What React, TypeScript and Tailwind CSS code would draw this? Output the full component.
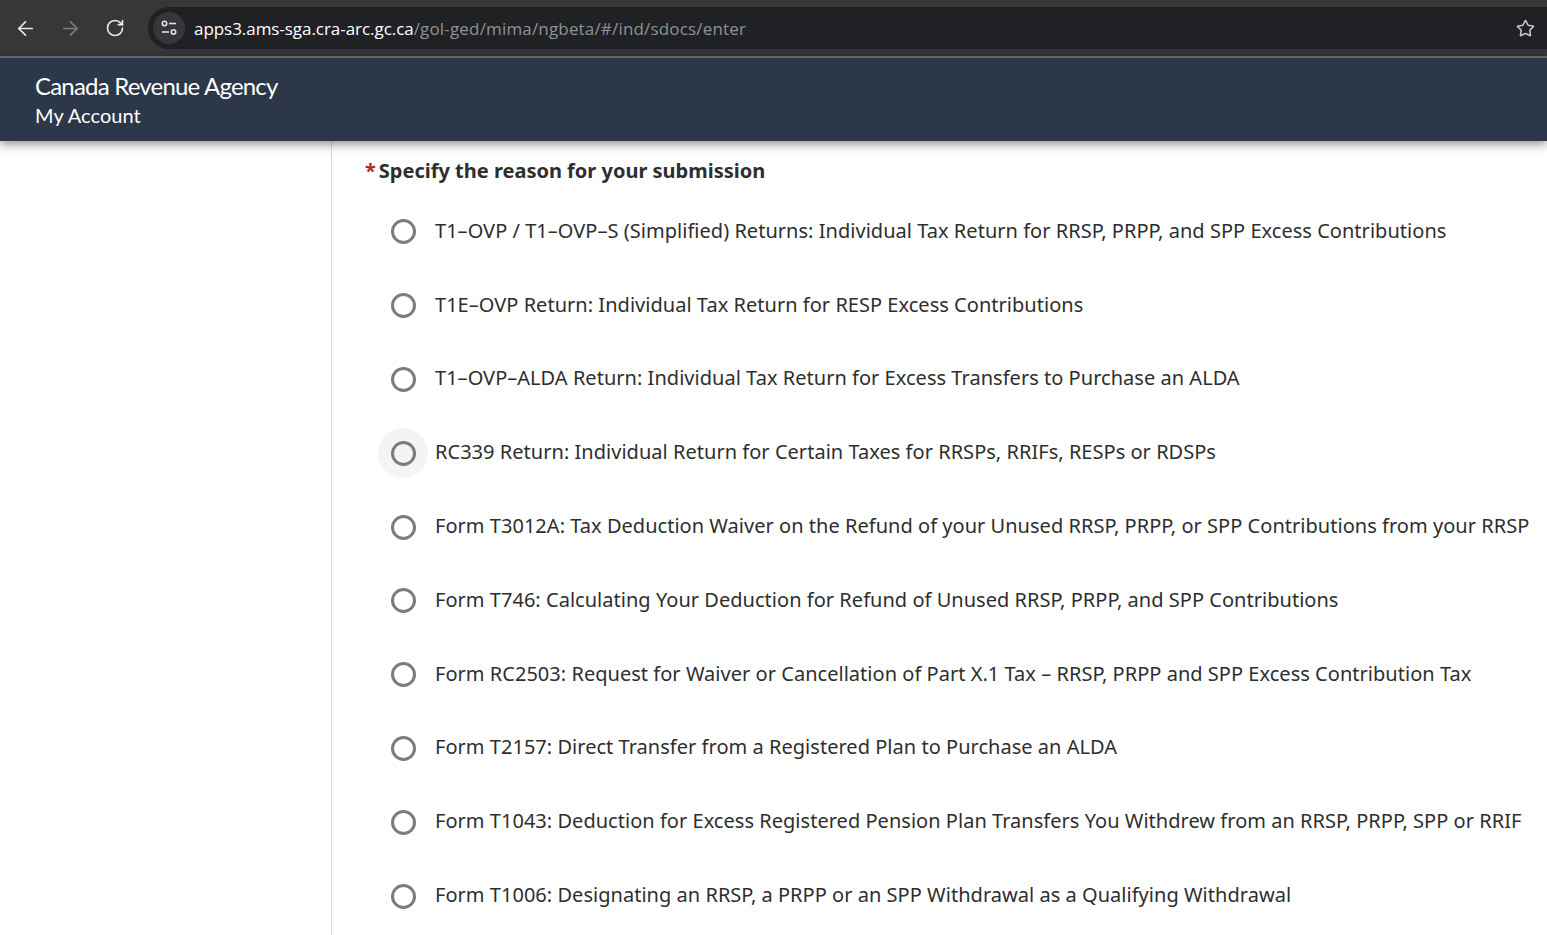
import { ArrowLeft, ArrowRight, RotateCw, Star } from 'lucide-react';

const reasons = [
  'T1–OVP / T1–OVP–S (Simplified) Returns: Individual Tax Return for RRSP, PRPP, and SPP Excess Contributions',
  'T1E–OVP Return: Individual Tax Return for RESP Excess Contributions',
  'T1–OVP–ALDA Return: Individual Tax Return for Excess Transfers to Purchase an ALDA',
  'RC339 Return: Individual Return for Certain Taxes for RRSPs, RRIFs, RESPs or RDSPs',
  'Form T3012A: Tax Deduction Waiver on the Refund of your Unused RRSP, PRPP, or SPP Contributions from your RRSP',
  'Form T746: Calculating Your Deduction for Refund of Unused RRSP, PRPP, and SPP Contributions',
  'Form RC2503: Request for Waiver or Cancellation of Part X.1 Tax – RRSP, PRPP and SPP Excess Contribution Tax',
  'Form T2157: Direct Transfer from a Registered Plan to Purchase an ALDA',
  'Form T1043: Deduction for Excess Registered Pension Plan Transfers You Withdrew from an RRSP, PRPP, SPP or RRIF',
  'Form T1006: Designating an RRSP, a PRPP or an SPP Withdrawal as a Qualifying Withdrawal',
];

function TuneIcon() {
  return (
    <svg width="18" height="18" viewBox="0 0 18 18" fill="none" stroke="#e3e3e3" strokeWidth="1.6">
      <circle cx="4.5" cy="4.5" r="2.2" />
      <path d="M9 4.5h7" />
      <path d="M2 13h7" />
      <circle cx="13.5" cy="13" r="2.2" />
    </svg>
  );
}

function BrowserBar() {
  return (
    <div className="flex h-[56px] items-center bg-[#373737]">
      <div className="flex w-[148px] shrink-0 items-center gap-[22px] pl-[14px]">
        <ArrowLeft size={23} color="#e8e8e8" strokeWidth={1.8} />
        <ArrowRight size={23} color="#7b7b7b" strokeWidth={1.8} />
        <RotateCw size={20} color="#e8e8e8" strokeWidth={2} className="ml-[1px]" />
      </div>
      <div className="flex h-[42px] flex-1 items-center rounded-l-full bg-[#202124] pl-[5px] pr-[12px]">
        <div className="flex h-[32px] w-[32px] items-center justify-center rounded-full bg-[#36373a]">
          <TuneIcon />
        </div>
        <div className="ml-[9px] flex-1 whitespace-nowrap pt-[1px] font-['Open_Sans',sans-serif] text-[17px]">
          <span className="tracking-[-0.05px] text-white">apps3.ams-sga.cra-arc.gc.ca</span>
          <span className="tracking-[0.17px] text-[#8f9193]">/gol-ged/mima/ngbeta/#/ind/sdocs/enter</span>
        </div>
        <Star size={19} color="#c4c7c5" strokeWidth={2} />
      </div>
    </div>
  );
}

function Reason({ label, hover }: { label: string; hover: boolean }) {
  return (
    <label className="flex h-[73.8px] items-center">
      <span className={`flex h-[50px] w-[50px] shrink-0 items-center justify-center rounded-full ${hover ? 'bg-[#f4f4f4]' : ''}`}>
        <span className="h-[25px] w-[25px] rounded-full border-[3px] border-[#7c7c7c]" />
      </span>
      <span className="ml-[7px] -translate-y-[1px] whitespace-nowrap text-[20px] tracking-[0.03px] text-[#2e2e2e]">{label}</span>
    </label>
  );
}

export default function App() {
  return (
    <div className="flex h-[935px] flex-col overflow-hidden bg-white font-['Noto_Sans',sans-serif]">
      <BrowserBar />
      <header className="relative z-10 h-[85px] border-t-2 border-[#646569] bg-[#2c3749] pl-[35px] pt-[12px] font-['Lato',sans-serif] text-white shadow-[0_3px_10px_rgba(0,0,0,0.45)]">
        <div className="text-[24px] leading-[32px] tracking-[-0.8px]">Canada Revenue Agency</div>
        <div className="text-[20px] leading-[26px] tracking-[0.05px]">My Account</div>
      </header>
      <div className="flex flex-1">
        <aside className="w-[332px] shrink-0 border-r border-[#d9d9d9]" />
        <main className="flex-1 pl-[33px] pt-[15px]">
          <div className="flex h-[30px] items-center text-[20px] font-bold text-[#2e2e2e]">
            <span className="mr-[3px] text-[#b3261e]">*</span>
            Specify the reason for your submission
          </div>
          <div className="mt-[9px] pl-[13px]">
            {reasons.map((r, i) => (
              <Reason key={r} label={r} hover={i === 3} />
            ))}
          </div>
        </main>
      </div>
    </div>
  );
}
